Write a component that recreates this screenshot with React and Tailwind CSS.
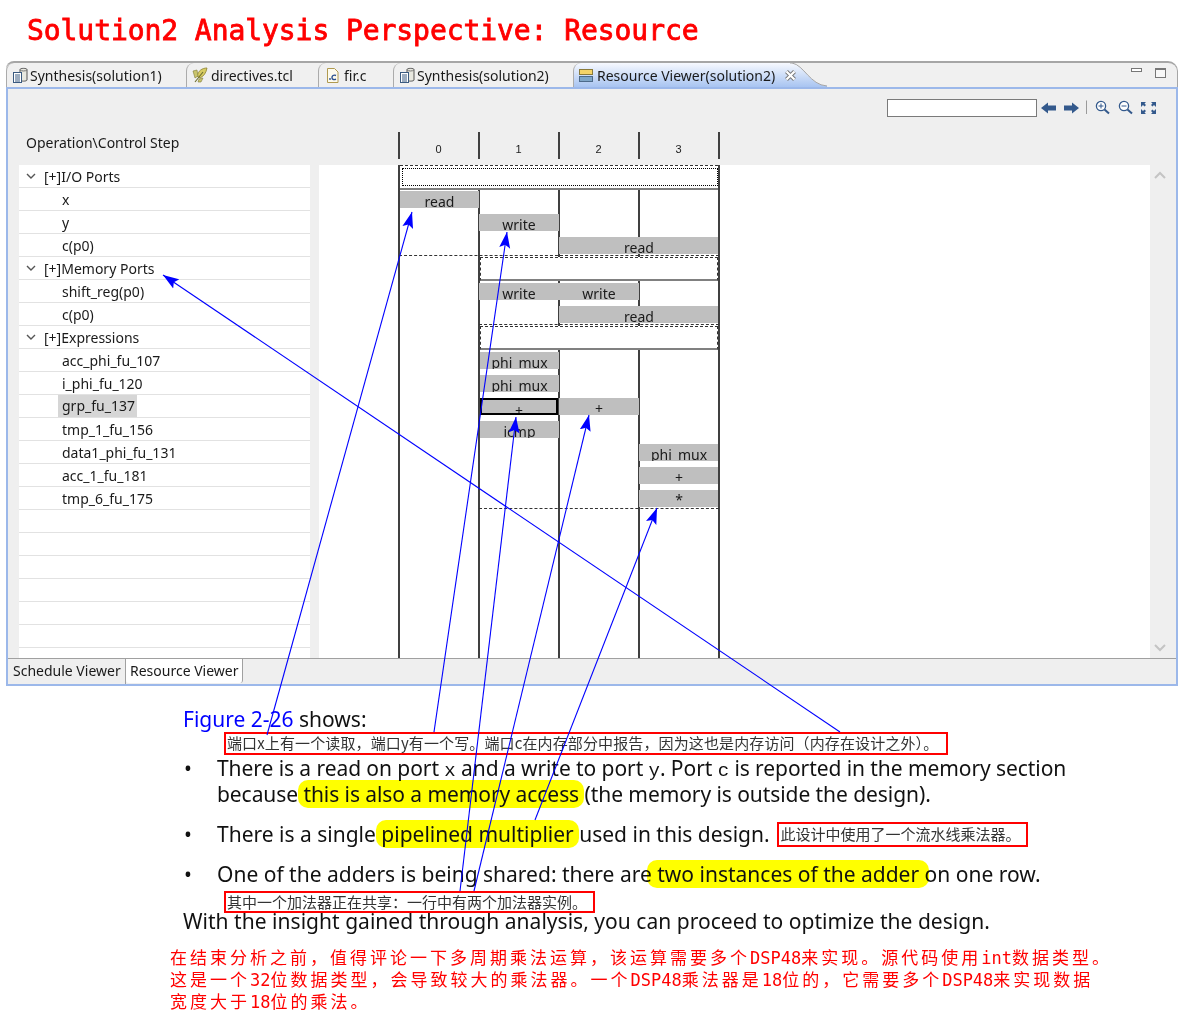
import React from 'react';

const uiFont = 'font-["Noto_Sans","Noto_Sans_CJK_SC",sans-serif]';
const cjk = 'font-["Noto_Sans_CJK_SC","Noto_Sans",sans-serif]';

function SynthIcon() {
    return (
        <svg width="17" height="16" viewBox="0 0 17 16" className="shrink-0">
            <path d="M8 2.5 C8 1 15 1 15 2.5 V13 C15 14.5 8 14.5 8 13 Z" fill="#e8e8e0" stroke="#555" />
            <path d="M8 3 C9 4.3 14 4.3 15 3" fill="none" stroke="#777" />
            <rect x="1.5" y="5.5" width="8" height="10" fill="#fff" stroke="#3a5a80" />
            <path d="M3 8h5M3 10h5M3 12h5M3 14h5" stroke="#3a5a80" />
        </svg>
    );
}

function FeatherIcon() {
    return (
        <svg width="16" height="16" viewBox="0 0 16 16" className="shrink-0">
            <path d="M15 1 C10 1 6 4 5 9 L8 11 C12 9 14 6 15 1 Z" fill="#d8cc62" stroke="#8a8030" strokeWidth="0.8" />
            <path d="M3 15 L11 5" stroke="#6f7030" strokeWidth="1.2" />
            <path d="M1 4 L5 3 L6 9 L3 11 Z" fill="#c9c46c" stroke="#7d7a36" strokeWidth="0.6" />
            <path d="M7 12 L11 11 L9 15 L6 15 Z" fill="#c9c46c" stroke="#7d7a36" strokeWidth="0.6" />
        </svg>
    );
}

function CFileIcon() {
    return (
        <svg width="13" height="15" viewBox="0 0 13 15" className="shrink-0">
            <path d="M1.5 .5 H8.5 L12 4 V14.5 H1.5 Z" fill="#fdfbee" stroke="#b09a50" />
            <circle cx="4" cy="11" r=".9" fill="#2a4f8f" />
            <path d="M10 7.5 C7.5 6.3 5.8 8 6 9.8 C6.2 11.8 8.3 12 10 11.2" fill="none" stroke="#2a4f8f" strokeWidth="1.4" />
        </svg>
    );
}

function ResourceIcon() {
    return (
        <svg width="15" height="13" viewBox="0 0 15 13" className="shrink-0">
            <rect x=".5" y=".5" width="13" height="5" fill="#f5d468" stroke="#8a7a3a" />
            <rect x=".5" y="7.5" width="13" height="5" fill="#7fa6c8" stroke="#4d6a8a" />
        </svg>
    );
}

function Tab({ icon, label, width, gap = 'gap-[1px]', pad = 'pl-[5px]' }) {
    return (
        <div className={`flex items-center h-full rounded-tl-[8px] border-l border-[#ababab] ${width} ${gap} ${pad}`}>
            {icon}
            <span className="text-[14px] text-[#1a1a1a] whitespace-nowrap">{label}</span>
        </div>
    );
}

function TabBar() {
    return (
        <div className="flex h-[24px] bg-[#f0f0f0] border-t-2 border-r border-[#a6a6a6] rounded-tl-[8px] rounded-tr-[10px] box-content relative">
            <Tab icon={<SynthIcon />} label="Synthesis(solution1)" width="w-[180px]" />
            <Tab icon={<FeatherIcon />} label="directives.tcl" width="w-[132px]" gap="gap-[3px]" />
            <Tab icon={<CFileIcon />} label="fir.c" width="w-[75px]" gap="gap-[5px]" pad="pl-[7px]" />
            <Tab icon={<SynthIcon />} label="Synthesis(solution2)" width="w-[180px]" />
            <div className="flex items-center w-[217px] h-full pl-[5px] gap-[3px] rounded-tl-[8px] border-l border-[#ababab] bg-gradient-to-b from-[#f7f9fe] to-[#a8c4f1]">
                <ResourceIcon />
                <span className="text-[14px] text-[#1a1a1a] whitespace-nowrap">Resource Viewer(solution2)</span>
                <svg width="13" height="13" viewBox="0 0 13 13" className="relative z-10 ml-[6px] shrink-0 overflow-visible">
                    <path d="M2.5 2.5 L10.5 10.5 M10.5 2.5 L2.5 10.5" stroke="#777" strokeWidth="4" />
                    <path d="M2.5 2.5 L10.5 10.5 M10.5 2.5 L2.5 10.5" stroke="#fff" strokeWidth="2.2" />
                </svg>
            </div>
            <svg width="38" height="24" viewBox="0 0 38 24" className="shrink-0">
                <defs>
                    <linearGradient id="tabfade" x1="0" y1="0" x2="0" y2="1">
                        <stop offset="0" stopColor="#f7f9fe" />
                        <stop offset="1" stopColor="#a8c4f1" />
                    </linearGradient>
                </defs>
                <path d="M0 0 H2 C14 2 20 22 37 23 V24 H0 Z" fill="url(#tabfade)" />
                <path d="M0 0 H2 C14 2 20 22 37 23" fill="none" stroke="#a6a6a6" strokeWidth="1" />
            </svg>
            <div className="flex-1" />
            <div className="flex gap-[13px] pr-[11px] pt-[5px]">
                <div className="w-[11px] h-[4px] border border-[#777] bg-white" />
                <div className="w-[11px] h-[10px] border border-[#777] border-t-2 bg-[#f8f8f8]" />
            </div>
        </div>
    );
}

function Toolbar() {
    return (
        <div className="flex items-center justify-end h-[18px] mt-[10px] pr-[16px]">
            <div className="w-[150px] h-[18px] bg-white border border-[#7a7a7a]" />
            <svg width="120" height="18" viewBox="0 0 120 18" className="ml-[3px]">
                <path d="M1 9 L8 3.5 V6.5 H16 V11.5 H8 V14.5 Z" fill="#33598c" />
                <path d="M39 9 L32 3.5 V6.5 H24 V11.5 H32 V14.5 Z" fill="#33598c" />
                <path d="M46.5 1.5 V15" stroke="#9a9a9a" />
                <circle cx="61" cy="7" r="4.6" fill="#fff" stroke="#33598c" strokeWidth="1.3" />
                <path d="M58.5 7 h5 M61 4.5 v5" stroke="#33598c" />
                <path d="M64.5 10.5 L69 14.5" stroke="#33598c" strokeWidth="2" />
                <circle cx="84" cy="7" r="4.6" fill="#fff" stroke="#33598c" strokeWidth="1.3" />
                <path d="M81.5 7 h5" stroke="#33598c" />
                <path d="M87.5 10.5 L92 14.5" stroke="#33598c" strokeWidth="2" />
                <path d="M101 3 h5 l-1.5 1.5 1.5 1.5 -1.5 1.5 -1.5 -1.5 -2 2 Z" fill="#33598c" />
                <path d="M116 3 h-5 l1.5 1.5 -1.5 1.5 1.5 1.5 1.5 -1.5 2 2 Z" fill="#33598c" />
                <path d="M101 15 h5 l-1.5 -1.5 1.5 -1.5 -1.5 -1.5 -1.5 1.5 -2 -2 Z" fill="#33598c" />
                <path d="M116 15 h-5 l1.5 -1.5 -1.5 -1.5 1.5 -1.5 1.5 1.5 2 -2 Z" fill="#33598c" />
            </svg>
        </div>
    );
}

function HeaderRow() {
    return (
        <div className="flex h-[27px] mt-[15px] mb-[6px]">
            <div className="w-[390px] pl-[18px] text-[14px] leading-[22px] text-[#1a1a1a]">Operation\Control Step</div>
            {['0', '1', '2', '3'].map((n) => (
                <div key={n} className='w-[80px] border-l-2 border-[#404040] text-center pt-[10px] pr-[1px] text-[11px] leading-[14px] text-[#1a1a1a] font-["Liberation_Sans",sans-serif]'>
                    {n}
                </div>
            ))}
            <div className="w-[2px] bg-[#404040]" />
        </div>
    );
}

const treeRows = [
    { label: '[+]I/O Ports', group: true },
    { label: 'x' },
    { label: 'y' },
    { label: 'c(p0)' },
    { label: '[+]Memory Ports', group: true },
    { label: 'shift_reg(p0)' },
    { label: 'c(p0)' },
    { label: '[+]Expressions', group: true },
    { label: 'acc_phi_fu_107' },
    { label: 'i_phi_fu_120' },
    { label: 'grp_fu_137', selected: true },
    { label: 'tmp_1_fu_156' },
    { label: 'data1_phi_fu_131' },
    { label: 'acc_1_fu_181' },
    { label: 'tmp_6_fu_175' },
    { label: '' },
    { label: '' },
    { label: '' },
    { label: '' },
    { label: '' },
    { label: '' },
];

function Tree() {
    return (
        <div className="w-[291px] ml-[11px] bg-white">
            {treeRows.map((row, i) => (
                <div key={i} className="flex items-center h-[23px] border-b border-[#e2e2e2] text-[14px] text-[#1a1a1a]">
                    {row.group ? (
                        <div className="flex items-center pl-[7px] gap-[8px]">
                            <svg width="10" height="6" viewBox="0 0 10 6">
                                <path d="M1 1 L5 5 L9 1" fill="none" stroke="#555" strokeWidth="1.4" />
                            </svg>
                            <span>{row.label}</span>
                        </div>
                    ) : row.selected ? (
                        <span className="ml-[39px] pl-[4px] pr-[2px] h-[22px] leading-[22px] bg-[#d6d6d6]">{row.label}</span>
                    ) : (
                        <span className="ml-[43px]">{row.label}</span>
                    )}
                </div>
            ))}
        </div>
    );
}

function Bar({ place, children, lead = 'leading-[22px]' }) {
    return (
        <div className={`${place} z-10 h-[17px] mt-[3px] bg-[#bfbfbf] overflow-hidden text-center text-[14px] text-[#1a1a1a] ${lead}`}>
            {children}
        </div>
    );
}

function SectionBox({ place }) {
    return (
        <div className={`${place} z-10 ml-[1px] mr-[1px] h-[24px] self-start bg-white border-t border-l border-r border-dashed border-[#333] border-b-2 [border-bottom-style:solid] [border-bottom-color:#808080]`} />
    );
}

function Chart() {
    return (
        <div className="relative w-[831px] ml-[9px] bg-white">
            {/* step lines run behind the bars */}
            <div className="absolute top-0 bottom-0 left-[79px] w-[2px] bg-[#404040]" />
            <div className="absolute top-0 bottom-0 left-[159px] w-[2px] bg-[#404040]" />
            <div className="absolute top-0 bottom-0 left-[239px] w-[2px] bg-[#404040]" />
            <div className="absolute top-0 bottom-0 left-[319px] w-[2px] bg-[#404040]" />
            <div className="absolute top-0 bottom-0 left-[399px] w-[2px] bg-[#404040]" />

            <div className="relative ml-[80px] grid grid-cols-[80px_80px_80px_80px] grid-rows-[repeat(15,23px)] w-[320px]">
                <div className="col-[1/5] row-[1] z-10 ml-[1px] mr-[1px] h-[25px] self-start bg-white border-t border-dashed border-[#333] pt-[2px] border-b-2 [border-bottom-style:solid] [border-bottom-color:#808080]">
                    <div className="h-[18px] ml-[2px] border border-dotted border-black" />
                </div>

                <Bar place="col-[1] row-[2] ml-[1px]">read</Bar>
                <Bar place="col-[2] row-[3]">write</Bar>
                <Bar place="col-[3/5] row-[4] mr-[1px] pl-[1px]">read</Bar>
                <div className="col-[1/5] row-[4] self-end z-10 border-b border-dashed border-[#333] mb-[1px]" />

                <SectionBox place="col-[2/5] row-[5]" />
                <Bar place="col-[2] row-[6]">write</Bar>
                <Bar place="col-[3] row-[6]">write</Bar>
                <Bar place="col-[3/5] row-[7] mr-[1px] pl-[1px]">read</Bar>
                <div className="col-[2/5] row-[7] self-end z-10 border-b border-dashed border-[#333] mb-[1px]" />

                <SectionBox place="col-[2/5] row-[8]" />
                <Bar place="col-[2] row-[9] ml-[1px]">phi_mux</Bar>
                <Bar place="col-[2] row-[10] ml-[1px]">phi_mux</Bar>
                <div className="col-[2] row-[11] z-10 h-[17px] mt-[3px] ml-[1px] mr-[1px] bg-[#bfbfbf] border-2 border-black overflow-hidden text-center text-[14px] leading-[21px] text-[#1a1a1a]">+</div>
                <Bar place="col-[3] row-[11]">+</Bar>
                <Bar place="col-[2] row-[12] ml-[1px]">icmp</Bar>
                <Bar place="col-[4] row-[13] mr-[1px] pl-[1px]">phi_mux</Bar>
                <Bar place="col-[4] row-[14] mr-[1px] pl-[1px]">+</Bar>
                <Bar place="col-[4] row-[15] mr-[1px] pl-[1px]" lead="leading-[19px]">*</Bar>
                <div className="col-[2/5] row-[15] self-end z-10 border-b border-dashed border-[#333] mb-[1px]" />
            </div>
        </div>
    );
}

function ScrollColumn() {
    return (
        <div className="flex flex-col items-center justify-between w-[20px] py-[6px]">
            <svg width="12" height="8" viewBox="0 0 12 8">
                <path d="M1 7 L6 2 L11 7" fill="none" stroke="#c4c4c4" strokeWidth="2" />
            </svg>
            <svg width="12" height="8" viewBox="0 0 12 8">
                <path d="M1 1 L6 6 L11 1" fill="none" stroke="#c4c4c4" strokeWidth="2" />
            </svg>
        </div>
    );
}

function BottomTabs() {
    return (
        <div className="flex h-[26px] border-t border-[#a0a0a0] text-[14px] text-[#1a1a1a]">
            <div className="flex items-center w-[118px] pl-[5px] pb-[2px] border-r border-[#a0a0a0] whitespace-nowrap">Schedule Viewer</div>
            <div className="flex items-center w-[117px] h-[24px] pl-[4px] pb-[1px] bg-white border-r border-[#a0a0a0] rounded-b-[3px] whitespace-nowrap">Resource Viewer</div>
        </div>
    );
}

function ViewerWindow() {
    return (
        <div className="ml-[6px] w-[1172px] flex flex-col">
            <TabBar />
            <div className="h-[599px] border-2 border-[#9cb8ea] bg-[#efefef] flex flex-col">
                <Toolbar />
                <HeaderRow />
                <div className="flex h-[493px]">
                    <Tree />
                    <Chart />
                    <ScrollColumn />
                </div>
                <BottomTabs />
            </div>
        </div>
    );
}

function Mark({ children, pad = 'mx-[-5px] px-[5px]' }) {
    return <span className={`bg-[#ffff00] rounded-[10px] mix-blend-multiply ${pad}`}>{children}</span>;
}

function Code({ children }) {
    return <span className='font-["Liberation_Mono",monospace] text-[19px] leading-none'>{children}</span>;
}

function NoteBox({ children, box }) {
    return <div className={`${box} border-2 border-[#ff0000] text-[15px] leading-[18px] text-[#333] pl-[1px] pb-[1px] whitespace-nowrap ${cjk} flex items-center`}>{children}</div>;
}

function Bullet({ children, extra = 'mt-[14px]' }) {
    return (
        <div className={`flex ml-[183px] ${extra}`}>
            <span className="w-[34px] pl-[1px] shrink-0">•</span>
            <div className="whitespace-nowrap">{children}</div>
        </div>
    );
}

function Lat({ children }) {
    return <span className='font-["DejaVu_Sans_Mono",monospace] tracking-[0px] leading-none text-[17px]'>{children}</span>;
}

function Doc() {
    return (
        <div className="text-[21px] leading-[26px] text-[#111]">
            <div className="ml-[183px] mt-[20px]">
                <span className="text-[#0000ff]">Figure 2-26</span> shows:
            </div>
            <NoteBox box="ml-[224px] w-[724px] h-[23px] tracking-[0.12px]">端口x上有一个读取，端口y有一个写。端口c在内存部分中报告，因为这也是内存访问（内存在设计之外）。</NoteBox>
            <Bullet extra="mt-0 tracking-[-0.07px]">
                There is a read on port <Code>x</Code> and a write to port <Code>y</Code>. Port <Code>c</Code> is reported in the memory section
                <br />
                because <Mark>this is also a memory access</Mark> (the memory is outside the design).
            </Bullet>
            <div className="flex items-center ml-[183px] mt-[14px]">
                <span className="w-[34px] pl-[1px] shrink-0">•</span>
                <div className="whitespace-nowrap">There is a single <Mark>pipelined multiplier</Mark> used in this design.</div>
                <NoteBox box="ml-[7px] w-[251px] h-[25px] pl-[2px]">此设计中使用了一个流水线乘法器。</NoteBox>
            </div>
            <Bullet>
                One of the adders is being shared: there are <Mark pad="mx-[-10px] px-[10px]">two instances of the adder</Mark> on one row.
            </Bullet>
            <NoteBox box="ml-[224px] mt-[4px] w-[371px] h-[22px]">其中一个加法器正在共享：一行中有两个加法器实例。</NoteBox>
            <div className="ml-[183px] -mt-[1px] leading-[18px] tracking-[0.03px]">With the insight gained through analysis, you can proceed to optimize the design.</div>
            <div className={`ml-[170px] mt-[16px] text-[17px] leading-[22px] tracking-[3px] text-[#ff0000] whitespace-nowrap ${cjk}`}>
                <div>在结束分析之前，值得评论一下多周期乘法运算，该运算需要多个<Lat>DSP48</Lat>来实现。源代码使用<Lat>int</Lat>数据类型。</div>
                <div>这是一个<Lat>32</Lat>位数据类型，会导致较大的乘法器。一个<Lat>DSP48</Lat>乘法器是<Lat>18</Lat>位的，它需要多个<Lat>DSP48</Lat>来实现数据</div>
                <div>宽度大于<Lat>18</Lat>位的乘法。</div>
            </div>
        </div>
    );
}

const arrows = [
    [267, 735, 412, 212],
    [434, 732, 507, 232],
    [460, 891, 516, 417],
    [474, 891, 589, 415],
    [535, 820, 657, 508],
    [840, 732, 163, 275],
];

function Arrows() {
    return (
        <svg width="1181" height="1025" viewBox="0 0 1181 1025" className="absolute top-0 left-0 z-20 pointer-events-none">
            <defs>
                <marker id="head" markerUnits="userSpaceOnUse" markerWidth="17" markerHeight="12" refX="16" refY="6" orient="auto">
                    <path d="M0 0.5 L16 6 L0 11.5 L3 6 Z" fill="#0000ff" />
                </marker>
            </defs>
            {arrows.map(([x1, y1, x2, y2], i) => (
                <line key={i} x1={x1} y1={y1} x2={x2} y2={y2} stroke="#0000ff" strokeWidth="1.1" markerEnd="url(#head)" />
            ))}
        </svg>
    );
}

export default function App() {
    return (
        <div className={`relative w-[1181px] h-[1025px] bg-white overflow-hidden ${uiFont}`}>
            <div className='h-[61px] pl-[27px] pt-[13px] text-[28px] leading-[36px] tracking-[-0.07px] text-[#ff0000] whitespace-nowrap font-["DejaVu_Sans_Mono",monospace] [-webkit-text-stroke:0.8px_#ff0000]'>
                Solution2 Analysis Perspective: Resource
            </div>
            <ViewerWindow />
            <Doc />
            <Arrows />
        </div>
    );
}
